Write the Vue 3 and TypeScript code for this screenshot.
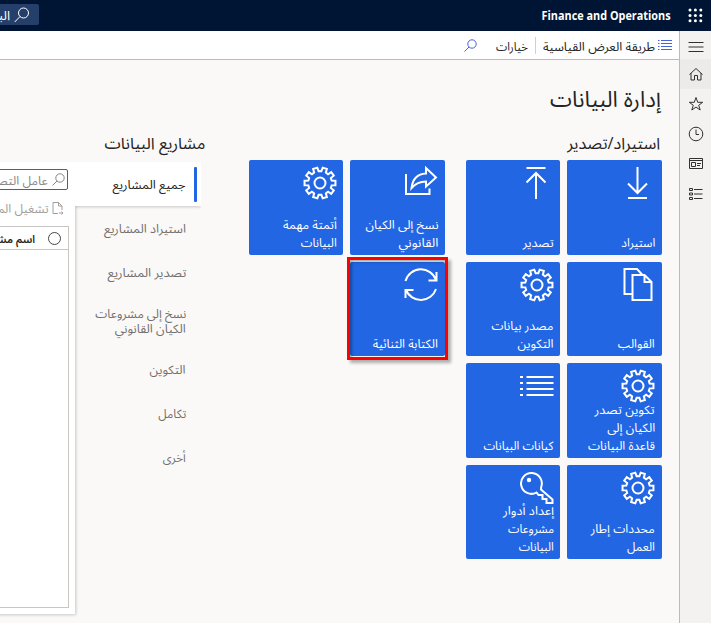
<script setup lang="ts">
import type { Directive } from 'vue'

interface Line { text: string; width: number }
interface Tile { icon: string; lines: Line[]; marked?: boolean }

const vFit: Directive<HTMLElement, number> = {
  mounted(el, { value }) {
    const natural = el.getBoundingClientRect().width
    if (natural > 0) {
      el.style.transform = `scaleX(${value / natural})`
      el.style.marginLeft = `${value - natural}px`
    }
  },
}

const importTiles: Tile[] = [
  { icon: 'download', lines: [{ text: 'استيراد', width: 34 }] },
  { icon: 'upload', lines: [{ text: 'تصدير', width: 31 }] },
  { icon: 'pages', lines: [{ text: 'القوالب', width: 37 }] },
  { icon: 'gear', lines: [{ text: 'مصدر بيانات', width: 62 }, { text: 'التكوين', width: 36 }] },
  { icon: 'gear', lines: [{ text: 'تكوين تصدر', width: 60 }, { text: 'الكيان إلى', width: 48 }, { text: 'قاعدة البيانات', width: 67 }] },
  { icon: 'list', lines: [{ text: 'كيانات البيانات', width: 70 }] },
  { icon: 'gear', lines: [{ text: 'محددات إطار', width: 64 }, { text: 'العمل', width: 28 }] },
  { icon: 'key', lines: [{ text: 'إعداد أدوار', width: 51 }, { text: 'مشروعات', width: 46 }, { text: 'البيانات', width: 35 }] },
]
const moreTiles: Tile[] = [
  { icon: 'share', lines: [{ text: 'نسخ إلى الكيان', width: 73 }, { text: 'القانوني', width: 40 }] },
  { icon: 'gear', lines: [{ text: 'أتمتة مهمة', width: 54 }, { text: 'البيانات', width: 36 }] },
  { icon: 'sync', lines: [{ text: 'الكتابة الثنائية', width: 65 }], marked: true },
]
const groups = [importTiles, moreTiles]

const projectTabs: Line[][] = [
  [{ text: 'جميع المشاريع', width: 73 }],
  [{ text: 'استيراد المشاريع', width: 82 }],
  [{ text: 'تصدير المشاريع', width: 79 }],
  [{ text: 'نسخ إلى مشروعات', width: 91 }, { text: 'الكيان القانوني', width: 71 }],
  [{ text: 'التكوين', width: 36 }],
  [{ text: 'تكامل', width: 28 }],
  [{ text: 'أخرى', width: 23 }],
]

const gear = (() => {
  const teeth = 10
  const pts: string[] = []
  for (let i = 0; i < teeth; i++) {
    const c = (i + 0.5) * 2 * Math.PI / teeth
    for (const [r, d] of [[11.9, -0.2], [15.6, -0.14], [15.6, 0.14], [11.9, 0.2]]) {
      pts.push(`${(17 + r * Math.sin(c + d)).toFixed(2)} ${(17 - r * Math.cos(c + d)).toFixed(2)}`)
    }
  }
  return `M${pts.join('L')}Z`
})()

const glyphs: Record<string, string> = {
  download: 'M16.500 1v26M7 17.500L16.500 27L26 17.500M7 32h19',
  upload: 'M16 33V7M6.500 16.500L16 7L25.500 16.500M6.500 1.900h19',
  pages: 'M11.500 26H3.500V1H16L21.500 7M11.500 7H23.500L30.500 14V32H11.500ZM23.500 7v7h7',
  gear: gear + 'M22.500 17a5.500 5.500 0 1 1-11 0a5.500 5.500 0 1 1 11 0Z',
  list: 'M6.500 8H33.500M6.500 14H33.500M6.500 20H33.500M6.500 26H33.500M0 8h3M0 14h3M0 20h3M0 26h3',
  key: 'M21 18.500L32.500 28.500V32H26.500V28H22.500V24H18.500L16.500 21.500A10.400 10.400 0 1 1 21.200 16Z',
  share: 'M2 8V28H25.500V22.500M7.500 22C8.500 13.500 13 8 22 7.500V2L32 11.500L22 20.500V15.500C15 15.500 11 18 7.500 22Z',
  sync: 'M1.500 13A16 16 0 0 1 32 12M32.500 4V12.500H24.500M32 21A16 16 0 0 1 2 22M1.500 30V22H9.500',
}
</script>

<template>
  <div class="app" dir="rtl">
    <header class="top">
      <svg class="waffle" width="15" height="15" viewBox="0 0 15 15">
        <template v-for="r in 3" :key="r">
          <circle v-for="c in 3" :key="c" :cx="c * 5.4 - 3.400" :cy="r * 5.4 - 3.400" r="1.500" />
        </template>
      </svg>
      <span class="brand" v-fit="129">Finance and Operations</span>
      <div class="global-search">
        <svg width="16" height="16" viewBox="0 0 16 16"><circle cx="9.500" cy="6" r="5" /><path d="M6 9.500L.7 15" /></svg>
        <span>البحث</span>
      </div>
    </header>

    <div class="body">
      <aside class="rail">
        <span class="rail-item menu"><svg viewBox="0 0 16 16"><path d="M.5 3.500h15M.5 8h15M.5 12.500h15" /></svg></span>
        <span class="rail-item active"><svg viewBox="0 0 16 16"><path d="M1.500 8.500L8 2.500L14.500 8.500M3 7.200V14H6.500V9.500H9.500V14H13V7.200" /></svg></span>
        <span class="rail-item"><svg viewBox="0 0 16 16"><path d="M8 1.500L9.700 6.300H14.700L10.700 9.300L12.200 14L8 11.100L3.800 14L5.300 9.300L1.300 6.300H6.300Z" /></svg></span>
        <span class="rail-item"><svg viewBox="0 0 16 16"><circle cx="8" cy="8" r="6.800" /><path d="M8 3.500V8.500H11" /></svg></span>
        <span class="rail-item"><svg viewBox="0 0 16 16"><path d="M1.500 2.500H14.500V12.500H1.500ZM1.500 4.500H14.500M3.500 6.500H7.500V10.500H3.500ZM9 7.500h4M9 9.500h3" /></svg></span>
        <span class="rail-item"><svg viewBox="0 0 16 16"><path d="M1.500 2.500H4.500V4.500H1.500ZM1.500 7H4.500V9H1.500ZM1.500 11.500H4.500V13.500H1.500ZM6 3.500H14.500M6 8H14.500M6 12.500H14.500" /></svg></span>
      </aside>

      <div class="main">
        <div class="actions">
          <svg class="view-icon" width="14" height="11" viewBox="0 0 14 11"><path d="M3 .5H14M3 3.500H14M3 6.500H14M3 9.500H14M0 .5h1.500M0 3.500h1.500M0 6.500h1.500M0 9.500h1.500" /></svg>
          <span class="action view" v-fit="112">طريقة العرض القياسية</span>
          <i class="divider" />
          <span class="action options" v-fit="32">خيارات</span>
          <svg class="find" width="13" height="13" viewBox="0 0 13 13"><circle cx="8" cy="5" r="4.200" /><path d="M5 8L.5 12.500" /></svg>
        </div>

        <div class="workspace">
          <section class="operations">
            <h1><span v-fit="111">إدارة البيانات</span></h1>
            <h2><span v-fit="93">استيراد/تصدير</span></h2>
            <div class="groups">
              <div v-for="(group, g) in groups" :key="g" class="grid">
                <button v-for="(tile, i) in group" :key="i" class="tile" :class="{ marked: tile.marked }">
                  <svg class="glyph" viewBox="0 0 34 34">
                    <path :d="glyphs[tile.icon]" />
                    <circle v-if="tile.icon === 'key'" cx="9" cy="9" r="2.200" class="dot" />
                  </svg>
                  <span class="label">
                    <span v-for="line in tile.lines" :key="line.text" class="line" v-fit="line.width">{{ line.text }}</span>
                  </span>
                </button>
              </div>
            </div>
          </section>

          <section class="projects">
            <h2><span v-fit="101">مشاريع البيانات</span></h2>
            <div class="project-body">
              <nav class="tabs">
                <a v-for="(tab, i) in projectTabs" :key="i" class="tab" :class="{ selected: i === 0 }">
                  <span v-for="line in tab" :key="line.text" class="line" v-fit="line.width">{{ line.text }}</span>
                </a>
              </nav>
              <div class="panel">
                <div class="filter">
                  <svg width="13" height="13" viewBox="0 0 13 13"><circle cx="8" cy="5" r="4.200" /><path d="M5 8L.5 12.500" /></svg>
                  <span v-fit="68">عامل التصفية</span>
                </div>
                <div class="run">
                  <svg width="12" height="13" viewBox="0 0 12 13"><path d="M6 11.500H1V.5H6.500L10 4V8M6.500 .5V4H10M7 11h4M9.500 9.500L11 11L9.500 12.500" /></svg>
                  <span v-fit="78">تشغيل المشروع</span>
                </div>
                <div class="table">
                  <div class="table-head"><i class="radio" /><span v-fit="54">اسم مشروع</span></div>
                </div>
              </div>
            </div>
          </section>
        </div>
      </div>
    </div>
  </div>
</template>

<style>
body { background: #faf9f8; overflow: hidden; }
</style>

<style scoped>
* { box-sizing: border-box; }
.app { width: 711px; height: 623px; overflow: hidden; display: flex; flex-direction: column; font-family: "Open Sans", "Noto Sans Arabic", "DejaVu Sans", sans-serif; font-size: 12px; color: #252423; background: #faf9f8; }
svg { flex: none; fill: none; stroke: currentColor; }
span { white-space: nowrap; flex: none; transform-origin: 100% 50%; }
.top { height: 31px; flex: none; background: #001433; color: #fff; display: flex; align-items: center; padding-right: 8px; position: relative; }
.waffle { fill: #fff; stroke: none; }
.brand { font-size: 12px; font-weight: 700; margin-right: 17px; direction: ltr; }
.global-search { position: absolute; left: -120px; top: 4px; width: 159px; height: 21px; background: #243f69; border-radius: 2px; display: flex; align-items: center; padding-right: 9px; gap: 4px; font-size: 13px; }
.global-search span { padding-top: 2px; }
.body { flex: 1; min-height: 0; display: flex; }
.rail { width: 32px; flex: none; background: #f3f2f1; border-left: 1px solid #bdbbb9; display: flex; flex-direction: column; }
.rail-item { height: 30px; display: flex; align-items: center; justify-content: center; color: #323130; }
.rail-item.menu { height: 28px; padding-top: 3px; }
.rail-item svg { width: 16px; height: 16px; }
.rail-item.active { background: #edebe9; }
.main { flex: 1; min-width: 0; display: flex; flex-direction: column; }
.actions { height: 29px; flex: none; background: #fff; border-bottom: 1px solid #bdbbb9; display: flex; align-items: center; padding-right: 7px; }
.view-icon { color: #4166dc; }
.action { line-height: 26px; padding-top: 3px; }
.view { margin-right: 3px; }
.divider { width: 1px; height: 17px; background: #d2d0ce; margin-right: 7px; }
.options { margin-right: 7px; }
.find { color: #4166dc; margin-right: 19px; }
.workspace { flex: 1; min-height: 0; display: flex; padding-right: 17.300px; }
.operations { width: 456.700px; flex: none; }
h1, h2 { font-weight: 400; margin: 0; }
h1 span, h2 span { display: inline-block; }
h1 { font-size: 22px; line-height: 40px; height: 70px; padding-top: 18px; padding-right: 1px; }
h2 { font-size: 16px; line-height: 27px; height: 30px; padding-right: 2px; }
.groups { display: flex; gap: 21.200px; }
.grid { display: grid; grid-template-columns: 94.400px 94.400px; grid-auto-rows: 94.500px; gap: 7px; align-content: start; }
.tile { font: inherit; border: 0; margin: 0; background: #2266e3; color: #fff; border-radius: 2px; padding: 6px 6.700px 3px; display: flex; flex-direction: column; align-items: flex-start; justify-content: space-between; position: relative; }
.glyph { width: 34px; height: 34px; stroke-width: 2; }
.dot { fill: #fff; stroke: none; }
.label { display: flex; flex-direction: column; align-items: flex-start; line-height: 18px; margin-top: -4px; }
.line { display: block; width: max-content; }
.marked::after { content: ""; position: absolute; inset: -5px -3px -4px -3px; border: 3px solid #f00; box-shadow: 3px 3px 3px rgba(0,0,0,.3), inset 2px 2px 3px rgba(0,0,0,.3); }
.projects { flex: 1; min-width: 0; padding-top: 70px; }
.projects h2 { padding-right: 0; height: 32px; }
.project-body { display: flex; padding-right: 4px; }
.tabs { width: 126px; flex: none; }
.tab { height: 44px; padding-right: 15px; display: flex; flex-direction: column; align-items: flex-start; justify-content: center; color: #72706e; line-height: 15px; position: relative; }
.tab:nth-child(4) { height: 53px; }
.selected { z-index: 1; background: #fff; color: #252423; box-shadow: 0 1px 3px rgba(0,0,0,.2); clip-path: inset(0 0 -5px 0); }
.selected::before { content: ""; position: absolute; right: 4px; top: 5px; width: 3px; height: 35px; background: #2266e3; border-radius: 1px; }
.panel { width: 240px; flex: none; height: 452px; background: #fff; padding: 7px 7px 7px 0; box-shadow: 1px 1px 3px rgba(0,0,0,.2); clip-path: inset(0 -4px -4px 0); }
.filter { height: 21px; border: 1px solid #605e5c; border-radius: 2px; display: flex; align-items: center; gap: 4px; padding-right: 2px; color: #8a8886; }
.filter span { padding-top: 3px; }
.run { height: 36px; display: flex; align-items: center; gap: 3px; padding-right: 4px; color: #a19f9d; }
.run span { padding-top: 2px; }
.table { height: 382px; border: 1px solid #c8c6c4; margin-right: -.5px; }
.table-head { height: 23px; border-bottom: 1px solid #c8c6c4; display: flex; align-items: center; gap: 18px; padding-right: 7px; font-size: 11px; font-weight: 600; }
.table-head span { padding-top: 2px; margin-right: -6px; }
.radio { width: 13px; height: 13px; border: 1px solid #484644; border-radius: 50%; }
</style>
